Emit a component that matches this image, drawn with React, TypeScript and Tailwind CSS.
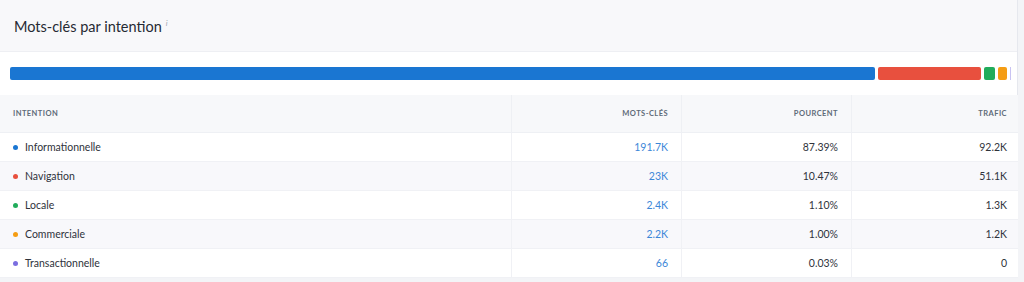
const rows = [
  { label: "Informationnelle", dot: "bg-[#1a76d2]", kw: "191.7K", pct: "87.39%", traffic: "92.2K" },
  { label: "Navigation", dot: "bg-[#e8503e]", kw: "23K", pct: "10.47%", traffic: "51.1K" },
  { label: "Locale", dot: "bg-[#21ac5b]", kw: "2.4K", pct: "1.10%", traffic: "1.3K" },
  { label: "Commerciale", dot: "bg-[#f59d13]", kw: "2.2K", pct: "1.00%", traffic: "1.2K" },
  { label: "Transactionnelle", dot: "bg-[#7b6ee0]", kw: "66", pct: "0.03%", traffic: "0" },
];

export default function App() {
  return (
    <div className="w-[1024px] h-[282px] bg-[#f3f4f7] overflow-hidden font-['Lato',sans-serif]">
      <div className="w-[1018px] bg-white border-r border-[#e6e8ee]">
        {/* header */}
        <div className="h-[52px] bg-[#f8f8fa] flex items-center pl-[14px] pt-[3px] border-b border-[#eeeff3]">
          <span className="text-[14.5px] text-[#262a33]">Mots-clés par intention</span>
          <span className="ml-[4px] -mt-[8px] text-[8px] italic text-[#a0a6b0]">i</span>
        </div>

        {/* distribution bar */}
        <div className="h-[43px] flex items-center pl-[10px] gap-[3px]">
          <div className="h-[13px] w-[865px] shrink-0 rounded-[2px] bg-[#1a76d2]" />
          <div className="h-[13px] w-[103px] shrink-0 rounded-[2px] bg-[#e8503e]" />
          <div className="h-[13px] w-[11px] shrink-0 rounded-[2px] bg-[#21ac5b]" />
          <div className="h-[13px] w-[9px] shrink-0 rounded-[2px] bg-[#f59d13]" />
          <div className="h-[13px] w-[1px] shrink-0 bg-[#c9c3f2]" />
        </div>

        {/* table */}
        <div className="grid grid-cols-[511px_170px_170px_167px] text-[10.5px]">
          <div className="h-[38px] bg-[#f7f8fa] flex items-center pl-[13px] text-[7.5px] font-bold tracking-[0.06em] text-[#5e6b78] border-b border-[#eef0f4]">INTENTION</div>
          <div className="h-[38px] bg-[#f7f8fa] flex items-center justify-end pr-[13px] text-[7.5px] font-bold tracking-[0.06em] text-[#5e6b78] border-l border-b border-[#eef0f4]">MOTS-CLÉS</div>
          <div className="h-[38px] bg-[#f7f8fa] flex items-center justify-end pr-[13px] text-[7.5px] font-bold tracking-[0.06em] text-[#5e6b78] border-l border-b border-[#eef0f4]">POURCENT</div>
          <div className="h-[38px] bg-[#f7f8fa] flex items-center justify-end pr-[11px] text-[7.5px] font-bold tracking-[0.06em] text-[#5e6b78] border-l border-b border-[#eef0f4]">TRAFIC</div>

          {rows.map((r, i) => {
            const bg = i % 2 === 1 ? "bg-[#f8f8fb]" : "bg-white";
            return [
              <div key={r.label + "a"} className={`h-[29px] flex items-center pl-[13px] pt-[1px] gap-[7px] text-[#2f333b] border-b border-[#f0f1f5] ${bg}`}>
                <span className={`w-[5px] h-[5px] rounded-full ${r.dot}`} />
                {r.label}
              </div>,
              <div key={r.label + "b"} className={`h-[29px] flex items-center justify-end pr-[13px] pt-[1px] text-[#3c87d8] border-l border-b border-[#f0f1f5] ${bg}`}>{r.kw}</div>,
              <div key={r.label + "c"} className={`h-[29px] flex items-center justify-end pr-[13px] pt-[1px] text-[#2f333b] border-l border-b border-[#f0f1f5] ${bg}`}>{r.pct}</div>,
              <div key={r.label + "d"} className={`h-[29px] flex items-center justify-end pr-[11px] pt-[1px] text-[#2f333b] border-l border-b border-[#f0f1f5] ${bg}`}>{r.traffic}</div>,
            ];
          })}
        </div>
      </div>
    </div>
  );
}
